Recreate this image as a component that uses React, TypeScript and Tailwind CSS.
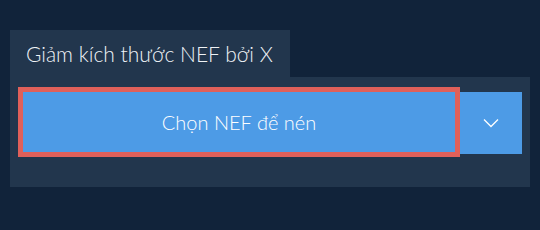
import React from 'react';

const App: React.FC = () => {
  return (
    <div
      className="min-h-screen w-full bg-[#11233a] pt-[30px] px-[10px]"
      style={{ fontFamily: 'Lato, "Noto Sans", sans-serif' }}
    >
      {/* tab heading */}
      <div className="flex">
        <div className="w-[280px] h-[47px] bg-[#22364d] flex items-center pl-[16px] text-[21px] font-light text-[#eef2f6] leading-none">
          Giảm kích thước NEF bởi X
        </div>
      </div>

      {/* panel */}
      <div className="w-[520px] bg-[#22364d] pl-[8px] pr-[8px] pt-[10px] pb-[30px]">
        <div className="flex items-start">
          <div className="w-[442px] h-[70px] border-[5px] border-[#e0605a] bg-[#4d9be6]">
            <button className="w-full h-full flex items-center justify-center text-white text-[20px] font-light leading-none">
              Chọn NEF để nén
            </button>
          </div>
          <button className="mt-[5px] w-[62px] h-[62px] bg-[#4d9be6] flex items-center justify-center">
            <svg width="16" height="10" viewBox="0 0 16 10" fill="none">
              <path d="M1 1.5 L8 8.5 L15 1.5" stroke="white" strokeWidth="1.3" />
            </svg>
          </button>
        </div>
      </div>
    </div>
  );
};

export default App;
